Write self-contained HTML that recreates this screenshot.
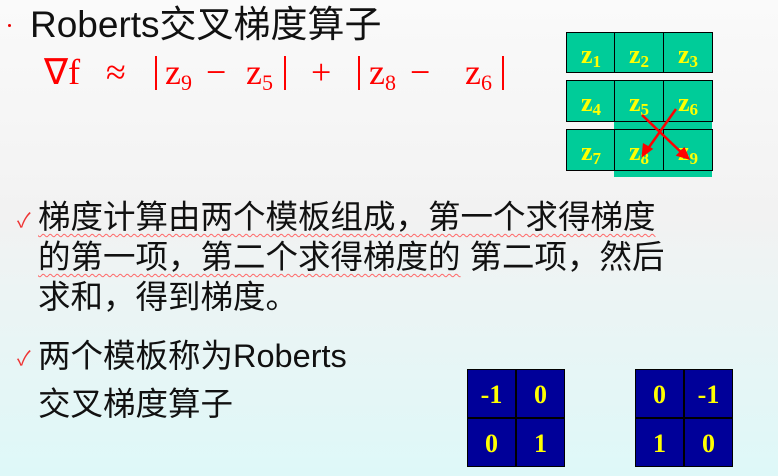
<!DOCTYPE html><html><head><meta charset="utf-8"><style>
body{margin:0;width:778px;height:476px;overflow:hidden;position:relative;background:linear-gradient(#fafafa 0%,#f2f2f2 45%,#def8f8 100%);font-family:"Liberation Sans","Noto Sans CJK SC",sans-serif;}
.t{position:absolute;white-space:nowrap;color:#111;}
.m{position:absolute;font-family:"Liberation Serif",serif;color:#f00;font-size:36px;white-space:nowrap;top:50px;line-height:44px}
.m sub{font-size:22px;vertical-align:-6px}
.bar{position:absolute;top:56px;width:1.5px;height:34px;background:#f00}
.c{position:absolute;background:#00cc99;border:1.5px solid #000;box-sizing:border-box;font-family:"Liberation Serif",serif;font-weight:bold;color:#ff0;font-size:26px;text-align:center;line-height:44px}
.c sub{font-size:17px;vertical-align:-4px}
.b{position:absolute;background:#000099;border:1px solid #000;box-sizing:border-box;width:49px;height:49px;font-family:"Liberation Serif",serif;font-weight:bold;color:#ff0;font-size:26px;text-align:center;line-height:49px}
.ck{position:absolute;color:#e33;font-size:20px}
.u{text-decoration:underline wavy #f66 1px;text-underline-offset:5px}
</style></head><body>
<div style="position:absolute;left:8px;top:24px;width:3px;height:3px;background:#e00;border-radius:50%"></div>
<div class="t" style="left:30px;top:-6px;font-size:37px">Roberts交叉梯度算子</div>
<div class="m" style="left:44px">∇f</div>
<div class="m" style="left:106px">≈</div>
<div class="bar" style="left:155px"></div>
<div class="m" style="left:165px">z<sub>9</sub></div>
<div class="m" style="left:206px">−</div>
<div class="m" style="left:246px">z<sub>5</sub></div>
<div class="bar" style="left:284px"></div>
<div class="m" style="left:311px">+</div>
<div class="bar" style="left:358px"></div>
<div class="m" style="left:369px">z<sub>8</sub></div>
<div class="m" style="left:410px">−</div>
<div class="m" style="left:465px">z<sub>6</sub></div>
<div class="bar" style="left:502px"></div>
<div style="position:absolute;left:614px;top:120px;width:98px;height:57px;background:#00cc99"></div>
<div class="c" style="left:566px;top:32px;width:50px;height:41px">z<sub>1</sub></div>
<div class="c" style="left:614px;top:32px;width:50px;height:41px">z<sub>2</sub></div>
<div class="c" style="left:663px;top:32px;width:50px;height:41px">z<sub>3</sub></div>
<div class="c" style="left:566px;top:80px;width:50px;height:42px">z<sub>4</sub></div>
<div class="c" style="left:614px;top:80px;width:50px;height:42px">z<sub>5</sub></div>
<div class="c" style="left:663px;top:80px;width:50px;height:42px">z<sub>6</sub></div>
<div class="c" style="left:566px;top:129px;width:50px;height:42px">z<sub>7</sub></div>
<div class="c" style="left:614px;top:129px;width:50px;height:42px">z<sub>8</sub></div>
<div class="c" style="left:663px;top:129px;width:50px;height:42px">z<sub>9</sub></div>
<svg style="position:absolute;left:0;top:0" width="778" height="476"><g stroke="#f00" stroke-width="2.5" fill="#f00">
<line x1="642" y1="115" x2="684" y2="155"/><line x1="676" y1="109" x2="647" y2="150"/>
<polygon points="688,158 678,155 684,149"/><polygon points="643,155 644,145 651,149"/></g></svg>
<div class="ck" style="left:17px;top:204px">✓</div>
<div class="t" style="left:38px;top:197px;font-size:32.5px;line-height:40px"><span class="u">梯度计算由两个模板组成，第一个求得梯度</span><br><span class="u">的第一项，第二个求得梯度的</span> 第二项，然后<br>求和，得到梯度。</div>
<div class="ck" style="left:17px;top:342px">✓</div>
<div class="t" style="left:38px;top:332px;font-size:32.5px;line-height:48px">两个模板称为Roberts<br>交叉梯度算子</div>
<div class="b" style="left:467px;top:369px">-1</div><div class="b" style="left:516px;top:369px">0</div>
<div class="b" style="left:467px;top:418px">0</div><div class="b" style="left:516px;top:418px">1</div>
<div class="b" style="left:635px;top:369px">0</div><div class="b" style="left:684px;top:369px">-1</div>
<div class="b" style="left:635px;top:418px">1</div><div class="b" style="left:684px;top:418px">0</div>
</body></html>
